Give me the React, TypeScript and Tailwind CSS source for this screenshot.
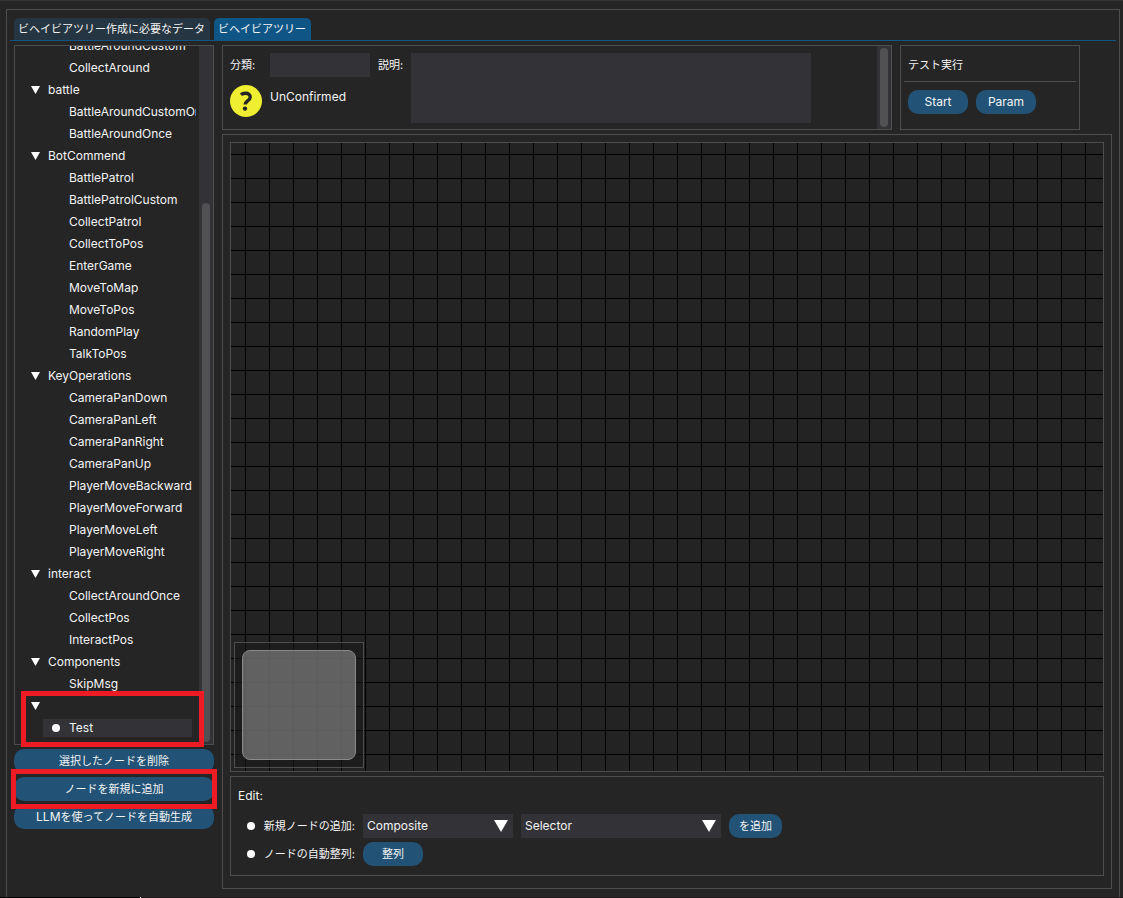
import { useState } from "react";
import type { ReactNode } from "react";
import clsx from "clsx";

type Group = { name: string; items: string[] };

const TREE: Group[] = [
  { name: "", items: ["BattleAroundCustom", "CollectAround"] },
  { name: "battle", items: ["BattleAroundCustomOnce", "BattleAroundOnce"] },
  {
    name: "BotCommend",
    items: [
      "BattlePatrol",
      "BattlePatrolCustom",
      "CollectPatrol",
      "CollectToPos",
      "EnterGame",
      "MoveToMap",
      "MoveToPos",
      "RandomPlay",
      "TalkToPos",
    ],
  },
  {
    name: "KeyOperations",
    items: [
      "CameraPanDown",
      "CameraPanLeft",
      "CameraPanRight",
      "CameraPanUp",
      "PlayerMoveBackward",
      "PlayerMoveForward",
      "PlayerMoveLeft",
      "PlayerMoveRight",
    ],
  },
  { name: "interact", items: ["CollectAroundOnce", "CollectPos", "InteractPos"] },
  { name: "Components", items: ["SkipMsg"] },
  { name: "", items: ["Test"] },
];

export default function App() {
  const [selected, setSelected] = useState("Test");

  return (
    <div className="flex h-screen min-h-[600px] flex-col overflow-hidden border-t border-[#333337] bg-[#252526] font-['Inter','Noto_Sans_CJK_JP',sans-serif] text-[12px] leading-4 text-[#f4f4f4]">
      <div className="mt-2 mr-[3px] ml-1.5 flex min-h-0 flex-1 flex-col border border-b-0 border-[#4e4e4e] px-[3px] pt-2 pb-2">
        <div role="tablist" className="flex gap-1 border-b border-[#0f5687] px-1">
          <Tab label="ビヘイビアツリー作成に必要なデータ" />
          <Tab label="ビヘイビアツリー" active />
        </div>
        <div className="mt-1 flex min-h-0 flex-1 gap-2 px-1">
          <Sidebar selected={selected} onSelect={setSelected} />
          <main className="flex min-w-0 flex-1 flex-col gap-1">
            <div className="flex gap-2">
              <NodeInfo />
              <TestRun />
            </div>
            <section className="flex min-h-0 flex-1 flex-col gap-1 border border-[#4e4e4e] px-[7px] pt-[7px] pb-3">
              <Canvas />
              <EditPanel />
            </section>
          </main>
        </div>
      </div>
      {/* sliver of the window behind */}
      <div className="flex h-px">
        <div className="w-[140px] bg-black" />
        <div className="w-px bg-white" />
        <div className="flex-1 bg-[#1e1a1c]" />
      </div>
    </div>
  );
}

function Tab({ label, active }: { label: string; active?: boolean }) {
  return (
    <button
      role="tab"
      aria-selected={!!active}
      className={clsx(
        "h-[22px] rounded-t-[5px] pr-[5px] pl-1 text-[11px] whitespace-nowrap",
        active ? "bg-[#0f5687]" : "bg-[#253541]",
      )}
    >
      {label}
    </button>
  );
}

function Sidebar({
  selected,
  onSelect,
}: {
  selected: string;
  onSelect: (name: string) => void;
}) {
  return (
    <aside className="flex w-[200px] shrink-0 flex-col pb-[60px]">
      <div className="relative flex min-h-0 flex-1 border border-[#4e4e4e]">
        {/* scrolled to the end, so rows stick to the bottom */}
        <div className="mr-[3px] flex min-w-0 flex-1 flex-col justify-end overflow-hidden pb-[5px]">
          {TREE.map((g, i) => (
            <div key={i} className="shrink-0">
              {i > 0 && (
                <div className="flex h-[22px] items-center gap-2 pl-4">
                  <Arrow className="h-2 w-[9px]" />
                  <span>{g.name}</span>
                </div>
              )}
              <ul>
                {g.items.map((item) => (
                  <li key={item} className="flex h-[22px] items-center pr-1 pl-7">
                    <button
                      onClick={() => onSelect(item)}
                      className={clsx(
                        "flex h-[18px] w-full items-center text-left whitespace-nowrap",
                        item === selected && "bg-[#333337]",
                      )}
                    >
                      <span className="flex w-[26px] shrink-0 justify-center">
                        {item === selected && <Bullet />}
                      </span>
                      {item}
                    </button>
                  </li>
                ))}
              </ul>
            </div>
          ))}
        </div>
        <div className="flex w-3.5 flex-col bg-[#333337] px-[3px] pb-0.5">
          <div className="flex-[157]" />
          <div className="flex-[539] rounded-full bg-[#515153]" />
        </div>
        <Highlight className="-bottom-[3px] left-1.5 h-14 w-[183px]" />
      </div>
      <div className="mt-1 flex flex-col gap-1">
        <Button>選択したノードを削除</Button>
        <div className="relative flex flex-col">
          <Button>ノードを新規に追加</Button>
          <Highlight className="-inset-x-[3px] -inset-y-2" />
        </div>
        <Button>
          <span className="text-[12px]">LLM</span>を使ってノードを自動生成
        </Button>
      </div>
    </aside>
  );
}

function NodeInfo() {
  return (
    <section className="flex min-w-0 flex-[0_1_670px] justify-between border border-[#4e4e4e]">
      <div className="flex min-w-0 gap-2 p-[7px] pb-1.5">
        <div className="grid grid-cols-[32px_100px] content-start gap-2">
          <label htmlFor="category" className="text-[11px] leading-6">
            分類:
          </label>
          <input id="category" className="h-6 w-full bg-[#333337] px-1 outline-none" />
          <svg viewBox="0 0 32 32" className="size-8" aria-hidden="true">
            <circle cx="16" cy="16" r="16" fill="#f0ee30" />
            <path
              d="M11 9.8C12 8.8 13.6 8.2 15.4 8.2C18.3 8.2 20.2 9.8 20.2 12.2C20.2 15.6 15.2 15.6 15.2 19.6"
              fill="none"
              stroke="#252526"
              strokeWidth="3.4"
            />
            <circle cx="15" cy="23.6" r="2.2" fill="#252526" />
          </svg>
          <span className="leading-6">UnConfirmed</span>
        </div>
        <label htmlFor="description" className="w-[25px] shrink-0 text-[11px] leading-6 whitespace-nowrap">
          説明:
        </label>
        <textarea
          id="description"
          className="block h-[70px] w-[400px] min-w-0 resize-none bg-[#333337] p-1 outline-none"
        />
      </div>
      <div className="flex w-3.5 shrink-0 bg-[#333337] px-[3px] py-0.5">
        <div className="flex-1 rounded-full bg-[#515153]" />
      </div>
    </section>
  );
}

function TestRun() {
  return (
    <section className="w-[180px] shrink-0 border border-[#4e4e4e] px-[3px] py-[7px]">
      <h2 className="px-1 text-[11px] leading-6">テスト実行</h2>
      <hr className="mt-1 mb-2 border-[#4e4e4e]" />
      <div className="flex gap-2 px-1">
        <Button className="w-[60px] text-[12px]">Start</Button>
        <Button className="w-[60px] text-[12px]">Param</Button>
      </div>
    </section>
  );
}

function Canvas() {
  return (
    <div className="relative min-h-0 flex-1 border border-[#4e4e4e] bg-[#232323] bg-[linear-gradient(to_right,black_1px,transparent_1px),linear-gradient(to_bottom,black_1px,transparent_1px)] bg-size-[24px_24px] bg-position-[14px_11px]">
      {/* minimap */}
      <div className="absolute bottom-[3px] left-[3px] h-[126px] w-[130px] border border-[#4e4e4e] bg-[#191919]/60 p-[7px]">
        <div className="h-full rounded-lg border border-[#8a8a8a] bg-[#787878]/75" />
      </div>
    </div>
  );
}

function EditPanel() {
  return (
    <section className="border border-[#4e4e4e] px-[7px] pt-[7px] pb-[9px]">
      <h2 className="leading-6">Edit:</h2>
      <div className="mt-1.5 flex flex-col gap-1">
        <div className="flex items-center gap-2">
          <RowLabel htmlFor="node-type">新規ノードの追加:</RowLabel>
          <Combo id="node-type" className="w-[150px]" options={["Composite", "Decorator", "Action"]} />
          <Combo
            id="node-name"
            label="ノード"
            className="w-[200px]"
            options={["Selector", "Sequence"]}
          />
          <Button className="w-[53px]">を追加</Button>
        </div>
        <div className="flex items-center gap-2">
          <RowLabel htmlFor="align">ノードの自動整列:</RowLabel>
          <Button id="align" className="w-[60px]">
            整列
          </Button>
        </div>
      </div>
    </section>
  );
}

function RowLabel({ htmlFor, children }: { htmlFor: string; children: ReactNode }) {
  return (
    <label
      htmlFor={htmlFor}
      className="flex w-[117px] shrink-0 items-center text-[11px] whitespace-nowrap"
    >
      <span className="flex w-[26px] justify-center">
        <Bullet />
      </span>
      {children}
    </label>
  );
}

function Combo({
  id,
  label,
  options,
  className,
}: {
  id: string;
  label?: string;
  options: string[];
  className: string;
}) {
  return (
    <div className={clsx("relative", className)}>
      <select
        id={id}
        aria-label={label}
        className="block h-6 w-full appearance-none bg-[#333337] px-1 outline-none"
      >
        {options.map((o) => (
          <option key={o}>{o}</option>
        ))}
      </select>
      <Arrow className="pointer-events-none absolute top-1.5 right-[5px] h-3 w-3.5" />
    </div>
  );
}

function Button({
  id,
  className,
  children,
}: {
  id?: string;
  className?: string;
  children: ReactNode;
}) {
  return (
    <button
      id={id}
      className={clsx(
        "h-6 rounded-[10px] bg-[#225377] whitespace-nowrap hover:bg-[#2b6590]",
        className?.includes("text-") ? className : clsx("text-[11px]", className),
      )}
    >
      {children}
    </button>
  );
}

function Arrow({ className }: { className: string }) {
  return (
    <svg viewBox="0 0 14 12" preserveAspectRatio="none" className={className} aria-hidden="true">
      <path d="M0 0h14L7 12z" fill="white" />
    </svg>
  );
}

function Bullet() {
  return <span className="size-2 rounded-full bg-white" />;
}

function Highlight({ className }: { className: string }) {
  return (
    <div
      className={clsx("pointer-events-none absolute z-10 border-5 border-[#ed1c24]", className)}
    />
  );
}
